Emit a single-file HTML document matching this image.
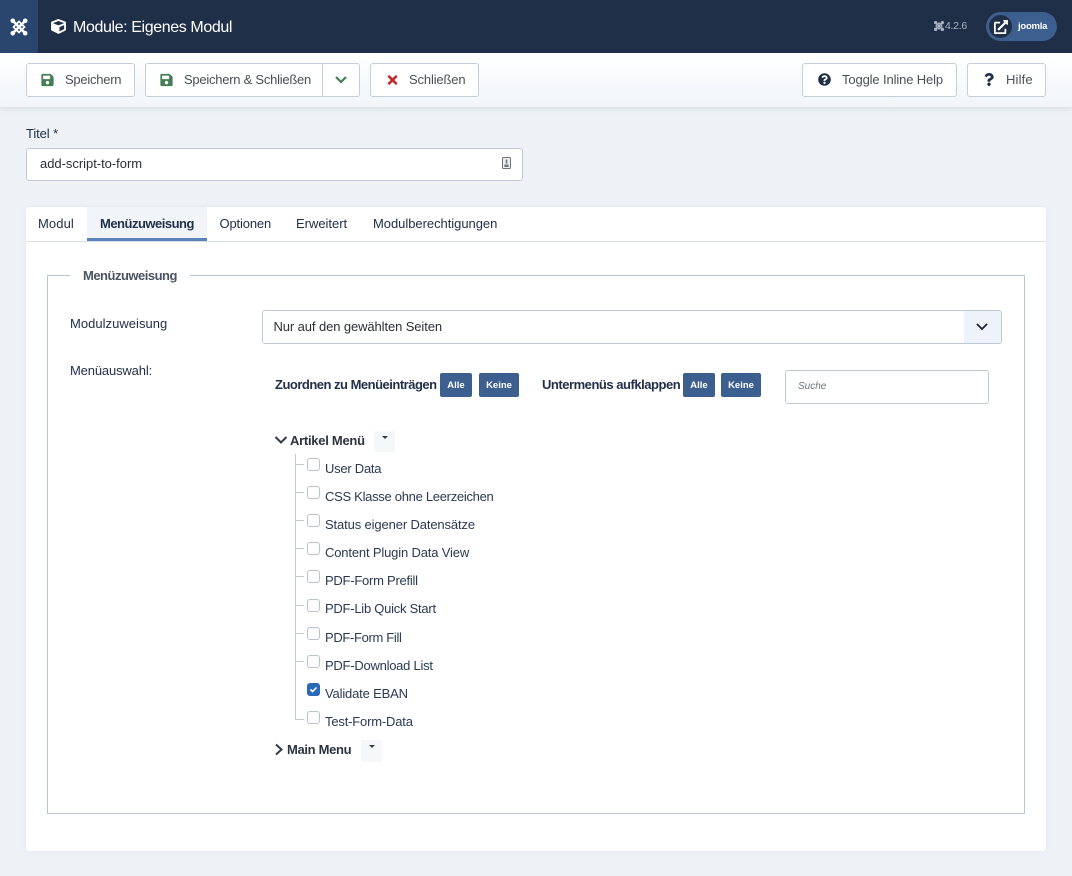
<!DOCTYPE html>
<html lang="de"><head><meta charset="utf-8"><title>Module: Eigenes Modul</title>
<style>
*{box-sizing:border-box}
html,body{margin:0;padding:0}
body{width:1072px;height:876px;position:relative;overflow:hidden;background:#eef2f6;font-family:"Liberation Sans",sans-serif;color:#22304a;font-size:13px}
.a,.t,svg{position:absolute}
.t{white-space:nowrap;line-height:16px;letter-spacing:-.25px}
.btn{position:absolute;top:63px;height:34px;background:#fff;border:1px solid #c5ced9;border-radius:3px}
.bt{color:#495057}
.b{font-weight:700}
.mini{position:absolute;top:373px;height:24px;background:#3d5f8f;border-radius:2px;color:#fff;font-size:9.5px;font-weight:700;text-align:center;line-height:25px}
.cb{position:absolute;left:307px;width:13px;height:13px;border:1px solid #b9c3ce;border-radius:3px;background:#fff}
.tick{position:absolute;left:296px;width:8px;height:1px;background:#c3c9cf}
.l{left:325px;color:#2a3a52}
</style></head><body>

<div class="a" style="left:0;top:0;width:1072px;height:53px;background:#1f2f48"></div>
<div class="a" style="left:0;top:0;width:38px;height:53px;background:#2a466f"></div>
<svg style="left:10px;top:18px" width="18" height="18" viewBox="0 0 18 18" fill="none" stroke="#fff"><path d="M3 3 L15 15 M15 3 L3 15" stroke-width="2.6"/><path d="M9 3.5 L14.5 9 L9 14.5 L3.5 9 Z" stroke-width="1.7"/><g fill="#fff" stroke="none"><circle cx="2.8" cy="2.8" r="2.3"/><circle cx="15.2" cy="2.8" r="2.3"/><circle cx="2.8" cy="15.2" r="2.3"/><circle cx="15.2" cy="15.2" r="2.3"/></g></svg>
<svg style="left:51px;top:19px" width="15" height="15" viewBox="0 0 512 512"><path fill="#fff" d="M239.1 6.3l-208 78c-18.7 7-31.1 25-31.1 45v225.1c0 18.2 10.3 34.8 26.5 42.9l208 104c13.5 6.8 29.4 6.8 42.9 0l208-104c16.3-8.1 26.5-24.8 26.5-42.9V129.3c0-20-12.4-37.9-31.1-44.9l-208-78C262 2.2 250 2.2 239.1 6.3zM256 68.4l192 72v1.1l-192 78-192-78v-1.1l192-72zm32 356V275.5l160-65v133.9l-160 80z"/></svg>
<div class="t" style="left:73px;top:20px;font-size:16px;color:#fff;letter-spacing:-.39px">Module: Eigenes Modul</div>

<svg style="left:934px;top:21px" width="10" height="10" viewBox="0 0 18 18" fill="none" stroke="#aab4c2"><path d="M3 3 L15 15 M15 3 L3 15" stroke-width="3"/><path d="M9 3.5 L14.5 9 L9 14.5 L3.5 9 Z" stroke-width="2"/><g fill="#aab4c2" stroke="none"><circle cx="3" cy="3" r="3"/><circle cx="15" cy="3" r="3"/><circle cx="3" cy="15" r="3"/><circle cx="15" cy="15" r="3"/></g></svg>
<div class="t" style="left:945px;top:18px;font-size:10.5px;color:#aab4c2;letter-spacing:-.3px">4.2.6</div>
<div class="a" style="left:986px;top:12px;width:71px;height:29px;border-radius:15px;background:#3d5f8f"></div>
<div class="a" style="left:989px;top:15px;width:23px;height:23px;border-radius:50%;background:#1f2f48"></div>
<svg style="left:994px;top:20px" width="14" height="14" viewBox="0 0 512 512"><path fill="#fff" d="M432,320H400a16,16,0,0,0-16,16V448H64V128H208a16,16,0,0,0,16-16V80a16,16,0,0,0-16-16H48A48,48,0,0,0,0,112V464a48,48,0,0,0,48,48H400a48,48,0,0,0,48-48V336A16,16,0,0,0,432,320ZM488,0h-128c-21.37,0-32.05,25.91-17,41l35.73,35.73L135,320.37a24,24,0,0,0,0,34L157.67,377a24,24,0,0,0,34,0L435.28,133.32,471,169c15,15,41,4.5,41-17V24A24,24,0,0,0,488,0Z"/></svg>
<div class="t b" style="left:1018px;top:19px;font-size:9.5px;color:#fff;letter-spacing:-.25px">joomla</div>

<div class="a" style="left:0;top:53px;width:1072px;height:54px;background:linear-gradient(#fff,#f1f5f9);box-shadow:0 2px 6px rgba(60,80,110,.12)"></div>

<div class="btn" style="left:26px;width:109px"></div>
<svg style="left:41px;top:73px" width="13" height="14" viewBox="0 0 448 512"><path fill="#457d54" d="M433.941 129.941l-83.882-83.882A48 48 0 0 0 316.118 32H48C21.49 32 0 53.49 0 80v352c0 26.51 21.49 48 48 48h352c26.51 0 48-21.49 48-48V163.882a48 48 0 0 0-14.059-33.941zM224 416c-35.346 0-64-28.654-64-64 0-35.346 28.654-64 64-64s64 28.654 64 64c0 35.346-28.654 64-64 64zm96-304.52V212c0 6.627-5.373 12-12 12H76c-6.627 0-12-5.373-12-12V108c0-6.627 5.373-12 12-12h228.52c3.183 0 6.235 1.264 8.485 3.515l3.48 3.48A11.996 11.996 0 0 1 320 111.48z"/></svg>
<div class="t bt" style="left:65px;top:72px">Speichern</div>

<div class="btn" style="left:145px;width:215px"></div>
<div class="a" style="left:322px;top:63px;width:1px;height:34px;background:#c5ced9"></div>
<svg style="left:160px;top:73px" width="13" height="14" viewBox="0 0 448 512"><path fill="#457d54" d="M433.941 129.941l-83.882-83.882A48 48 0 0 0 316.118 32H48C21.49 32 0 53.49 0 80v352c0 26.51 21.49 48 48 48h352c26.51 0 48-21.49 48-48V163.882a48 48 0 0 0-14.059-33.941zM224 416c-35.346 0-64-28.654-64-64 0-35.346 28.654-64 64-64s64 28.654 64 64c0 35.346-28.654 64-64 64zm96-304.52V212c0 6.627-5.373 12-12 12H76c-6.627 0-12-5.373-12-12V108c0-6.627 5.373-12 12-12h228.52c3.183 0 6.235 1.264 8.485 3.515l3.48 3.48A11.996 11.996 0 0 1 320 111.48z"/></svg>
<div class="t bt" style="left:184px;top:72px">Speichern &amp; Schließen</div>
<svg style="left:334px;top:75px" width="14" height="10" viewBox="0 0 14 10" fill="none"><path d="M2 2 L7 7 L12 2" stroke="#457d54" stroke-width="2.2"/></svg>

<div class="btn" style="left:370px;width:109px"></div>
<svg style="left:387px;top:73px" width="11" height="14" viewBox="0 0 352 512"><path fill="#c52827" d="M242.72 256l100.07-100.07c12.28-12.28 12.28-32.19 0-44.48l-22.24-22.24c-12.28-12.28-32.19-12.28-44.48 0L176 189.28 75.93 89.21c-12.28-12.28-32.19-12.28-44.48 0L9.21 111.45c-12.28 12.28-12.28 32.19 0 44.48L109.28 256 9.21 356.07c-12.28 12.28-12.28 32.19 0 44.48l22.24 22.24c12.28 12.28 32.2 12.28 44.48 0L176 322.72l100.07 100.07c12.28 12.28 32.2 12.28 44.48 0l22.24-22.24c12.28-12.28 12.28-32.19 0-44.48L242.72 256z"/></svg>
<div class="t bt" style="left:409px;top:72px;letter-spacing:-.15px">Schließen</div>

<div class="btn" style="left:802px;width:155px"></div>
<svg style="left:818px;top:73px" width="13" height="13" viewBox="0 0 512 512"><path fill="#1f2f48" d="M504 256c0 136.997-111.043 248-248 248S8 392.997 8 256C8 119.083 119.043 8 256 8s248 111.083 248 248zM262.655 90c-54.497 0-89.255 22.957-116.549 63.758-3.536 5.286-2.353 12.415 2.715 16.258l34.699 26.31c5.205 3.947 12.621 3.008 16.665-2.122 17.864-22.658 30.113-35.797 57.303-35.797 20.429 0 45.698 13.148 45.698 32.958 0 14.976-12.363 22.667-32.534 33.976C247.128 238.528 216 254.941 216 296v4c0 6.627 5.373 12 12 12h56c6.627 0 12-5.373 12-12v-1.333c0-28.462 83.186-29.647 83.186-106.667 0-58.002-60.165-102-116.531-102zM256 338c-25.365 0-46 20.635-46 46 0 25.364 20.635 46 46 46s46-20.636 46-46c0-25.365-20.635-46-46-46z"/></svg>
<div class="t bt" style="left:842px;top:72px;letter-spacing:-.13px">Toggle Inline Help</div>

<div class="btn" style="left:967px;width:79px"></div>
<svg style="left:984px;top:73px" width="10" height="13" viewBox="0 0 384 512"><path fill="#1f2f48" d="M202.021 0C122.202 0 70.503 32.703 29.914 91.026c-7.363 10.58-5.093 25.086 5.178 32.874l43.138 32.709c10.373 7.865 25.132 6.026 33.253-4.148 25.049-31.381 43.63-49.449 82.757-49.449 30.764 0 68.816 19.799 68.816 49.631 0 22.552-18.617 34.134-48.993 51.164-35.423 19.86-82.299 44.576-82.299 106.405V320c0 13.255 10.745 24 24 24h72.471c13.255 0 24-10.745 24-24v-5.773c0-42.86 125.268-44.645 125.268-160.627C377.504 66.256 286.902 0 202.021 0zM192 373.459c-38.196 0-69.271 31.075-69.271 69.271 0 38.195 31.075 69.27 69.271 69.27s69.271-31.075 69.271-69.271-31.075-69.27-69.271-69.27z"/></svg>
<div class="t bt" style="left:1006px;top:72px;letter-spacing:.15px">Hilfe</div>

<div class="t" style="left:26px;top:126px;letter-spacing:-.1px">Titel *</div>
<div class="a" style="left:26px;top:148px;width:497px;height:33px;background:#fff;border:1px solid #bfc9d6;border-radius:3px"></div>
<div class="t" style="left:40px;top:156px;color:#2b2f36;letter-spacing:-.03px">add-script-to-form</div>
<svg style="left:501px;top:157px" width="11" height="13" viewBox="0 0 11 13"><rect x="1.5" y=".5" width="8" height="11" rx="1" fill="#eee" stroke="#6c757d"/><rect x="4.7" y="2.5" width="1.6" height="4" fill="#6c757d"/><rect x="3.4" y="7.5" width="4.2" height="2.5" fill="#6c757d"/></svg>

<div class="a" style="left:26px;top:207px;width:1020px;height:644px;background:#fff;border-radius:3px;box-shadow:0 0 4px rgba(60,80,110,.08)"></div>
<div class="a" style="left:26px;top:241px;width:1020px;height:1px;background:#d8dfe6"></div>
<div class="a" style="left:87px;top:207px;width:120px;height:34px;background:#f1f5f9"></div>
<div class="a" style="left:87px;top:238px;width:120px;height:3px;background:#5b82b9"></div>
<div class="t" style="left:38px;top:216px;letter-spacing:.1px">Modul</div>
<div class="t b" style="left:100px;top:216px;letter-spacing:-.5px">Menüzuweisung</div>
<div class="t" style="left:219.5px;top:216px;letter-spacing:-.15px">Optionen</div>
<div class="t" style="left:296px;top:216px;letter-spacing:-.02px">Erweitert</div>
<div class="t" style="left:373px;top:216px;letter-spacing:-.04px">Modulberechtigungen</div>

<div class="a" style="left:47px;top:275px;width:978px;height:539px;border:1px solid #b9c8d0"></div>
<div class="a" style="left:70px;top:270px;width:120px;height:12px;background:#fff"></div>
<div class="t b" style="left:83px;top:268px;color:#4a5360;letter-spacing:-.5px">Menüzuweisung</div>

<div class="t" style="left:70px;top:316px;letter-spacing:.03px">Modulzuweisung</div>
<div class="a" style="left:262px;top:310px;width:740px;height:34px;background:#fff;border:1px solid #bfc9d6;border-radius:3px"></div>
<div class="a" style="left:964px;top:311px;width:37px;height:32px;background:#eef3fb;border-radius:0 2px 2px 0"></div>
<svg style="left:975px;top:322px" width="14" height="10" viewBox="0 0 14 10" fill="none"><path d="M2 2 L7 7 L12 2" stroke="#1a2230" stroke-width="1.7"/></svg>
<div class="t" style="left:273.5px;top:319px;color:#2b2f36;letter-spacing:-.1px">Nur auf den gewählten Seiten</div>

<div class="t" style="left:70px;top:363px;letter-spacing:-.15px">Menüauswahl:</div>
<div class="t b" style="left:275px;top:377px;letter-spacing:-.5px">Zuordnen zu Menüeinträgen</div>
<div class="mini" style="left:440px;width:32px">Alle</div>
<div class="mini" style="left:479px;width:40px">Keine</div>
<div class="t b" style="left:542px;top:377px;letter-spacing:-.47px">Untermenüs aufklappen</div>
<div class="mini" style="left:683px;width:32px">Alle</div>
<div class="mini" style="left:721px;width:40px">Keine</div>
<div class="a" style="left:785px;top:370px;width:204px;height:34px;background:#fff;border:1px solid #bfc9d6;border-radius:3px"></div>
<div class="t" style="left:798px;top:379px;font-size:10px;font-style:italic;color:#6c757d;letter-spacing:0">Suche</div>

<svg style="left:274px;top:435px" width="14" height="10" viewBox="0 0 14 10" fill="none"><path d="M1.5 2 L7 7.5 L12.5 2" stroke="#333d4a" stroke-width="2"/></svg>
<div class="t b" style="left:290px;top:433px;letter-spacing:-.27px;color:#2b3340">Artikel Menü</div>
<div class="a" style="left:374px;top:431px;width:21px;height:21px;background:#f6f7f9;border-radius:2px"></div>
<div class="a" style="left:382px;top:436px;border:3px solid transparent;border-top-color:#333d4a;border-bottom:0"></div>

<div class="a" style="left:295px;top:454px;width:1px;height:266px;background:#c3c9cf"></div>
<div class="tick" style="top:464px"></div><div class="tick" style="top:492px"></div><div class="tick" style="top:520px"></div><div class="tick" style="top:548px"></div><div class="tick" style="top:576px"></div><div class="tick" style="top:605px"></div><div class="tick" style="top:633px"></div><div class="tick" style="top:661px"></div><div class="tick" style="top:719px"></div>

<div class="cb" style="top:458px"></div><div class="t l" style="top:461px">User Data</div>
<div class="cb" style="top:486px"></div><div class="t l" style="top:489px;letter-spacing:-.29px">CSS Klasse ohne Leerzeichen</div>
<div class="cb" style="top:514px"></div><div class="t l" style="top:517px;letter-spacing:-.13px">Status eigener Datensätze</div>
<div class="cb" style="top:542px"></div><div class="t l" style="top:545px;letter-spacing:-.16px">Content Plugin Data View</div>
<div class="cb" style="top:570px"></div><div class="t l" style="top:573px">PDF-Form Prefill</div>
<div class="cb" style="top:599px"></div><div class="t l" style="top:601px">PDF-Lib Quick Start</div>
<div class="cb" style="top:627px"></div><div class="t l" style="top:630px;letter-spacing:-.33px">PDF-Form Fill</div>
<div class="cb" style="top:655px"></div><div class="t l" style="top:658px">PDF-Download List</div>
<div class="cb" style="top:683px;background:#2a69b8;border-color:#2a69b8"></div>
<svg style="left:307px;top:683px" width="13" height="13" viewBox="0 0 13 13" fill="none"><path d="M3.5 6.5 L5.6 8.5 L9.5 4.5" stroke="#fff" stroke-width="1.6"/></svg>
<div class="t l" style="top:686px;letter-spacing:-.17px">Validate EBAN</div>
<div class="cb" style="top:711px"></div><div class="t l" style="top:714px;letter-spacing:-.18px">Test-Form-Data</div>

<svg style="left:274px;top:743px" width="10" height="13" viewBox="0 0 10 13" fill="none"><path d="M2 1.5 L7.5 6.5 L2 11.5" stroke="#333d4a" stroke-width="2"/></svg>
<div class="t b" style="left:287px;top:742px;letter-spacing:-.33px;color:#2b3340">Main Menu</div>
<div class="a" style="left:361px;top:740px;width:21px;height:22px;background:#f6f7f9;border-radius:2px"></div>
<div class="a" style="left:369px;top:745px;border:3px solid transparent;border-top-color:#333d4a;border-bottom:0"></div>

</body></html>
